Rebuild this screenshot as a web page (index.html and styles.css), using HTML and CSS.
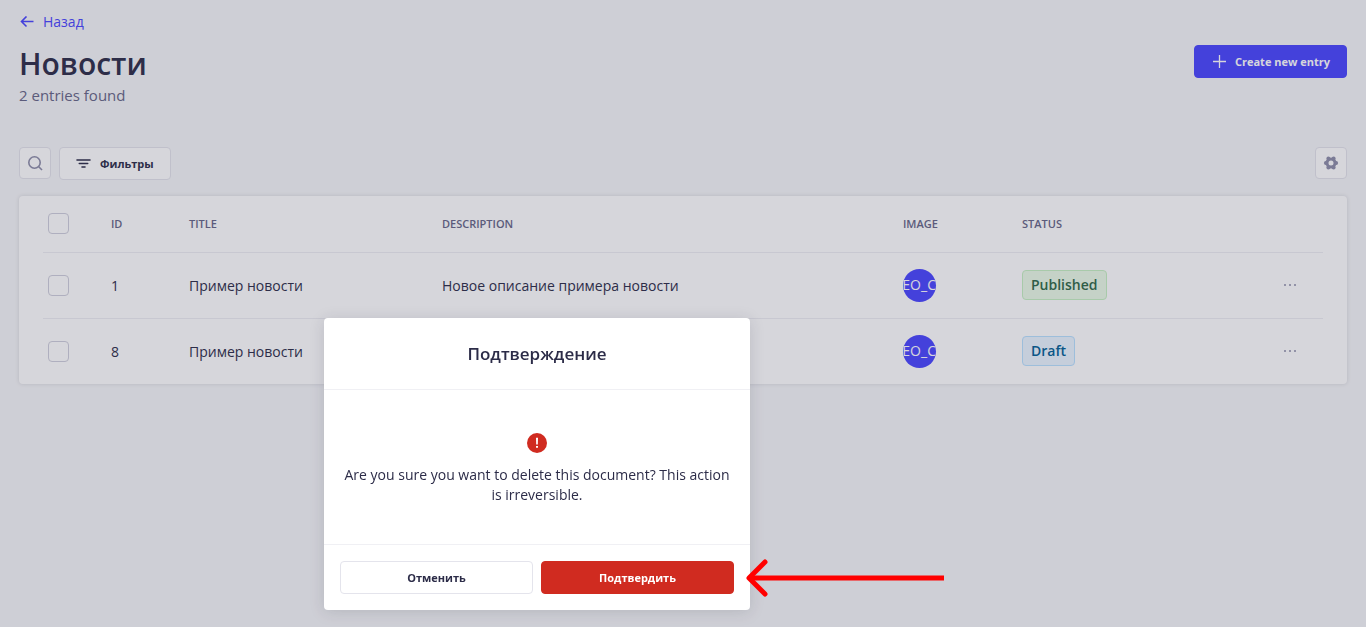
FILE: index.html
```html
<!DOCTYPE html>
<html lang="ru">
<head>
<meta charset="utf-8">
<meta name="viewport" content="width=device-width, initial-scale=1">
<title>Новости</title>
<link rel="stylesheet" href="styles.css">
</head>
<body>
<main class="page">
  <a class="back" href="#">
    <svg width="14" height="12" viewBox="0 0 14 12" fill="none" stroke="currentColor" stroke-width="1.6"><path d="M13.5 5.500H1.500M6.500 .5l-5 5 5 5"/></svg>
    <span>Назад</span>
  </a>
  <header class="header">
    <div>
      <h1 class="title">Новости</h1>
      <p class="subtitle">2 entries found</p>
    </div>
    <button class="btn btn-primary" type="button">
      <svg width="13" height="13" viewBox="0 0 13 13" stroke="currentColor" stroke-width="1.3"><path d="M6.5 0v13M0 6.5h13"/></svg>
      <span>Create new entry</span>
    </button>
  </header>
  <div class="toolbar">
    <button class="icon-btn" type="button" aria-label="Search">
      <svg width="16" height="16" viewBox="0 0 16 16" fill="none" stroke="currentColor" stroke-width="1.6"><circle cx="7.500" cy="7.500" r="5.700"/><path d="M11.500 11.500l3.500 3.500"/></svg>
    </button>
    <button class="btn btn-filter" type="button">
      <svg width="15" height="9" viewBox="0 0 15 9" fill="none" stroke="currentColor" stroke-width="1.6" stroke-linecap="round"><path d="M1 1h13M3.3 4.5h8.4M6 8h3"/></svg>
      <span>Фильтры</span>
    </button>
    <button class="icon-btn settings" type="button" aria-label="Settings">
      <svg width="16" height="16" viewBox="0 0 16 16" fill="currentColor"><circle cx="8" cy="8" r="4" fill="none" stroke="currentColor" stroke-width="3"/><circle cx="2.900" cy="8" r="2"/><circle cx="13.100" cy="8" r="2"/><circle cx="5.400" cy="3.600" r="2"/><circle cx="10.600" cy="3.600" r="2"/><circle cx="5.400" cy="12.400" r="2"/><circle cx="10.600" cy="12.400" r="2"/></svg>
    </button>
  </div>
  <section class="card">
    <table class="table">
      <colgroup><col class="c-check"><col class="c-id"><col class="c-title"><col><col class="c-image"><col class="c-status"><col class="c-more"></colgroup>
      <thead>
        <tr>
          <th><input class="check" type="checkbox" aria-label="Select all"></th>
          <th>ID</th><th>TITLE</th><th>DESCRIPTION</th><th>IMAGE</th><th>STATUS</th><th></th>
        </tr>
      </thead>
      <tbody>
        <tr>
          <td><input class="check" type="checkbox" aria-label="Select entry 1"></td>
          <td class="text">1</td><td class="text">Пример новости</td><td class="text">Новое описание примера новости</td>
          <td><span class="avatar"><span>DEO_CO</span></span></td>
          <td><span class="badge published">Published</span></td>
          <td><button class="more" type="button" aria-label="Actions"><svg width="12" height="2" viewBox="0 0 12 2" fill="currentColor"><circle cx="1" cy="1" r="1"/><circle cx="6" cy="1" r="1"/><circle cx="11" cy="1" r="1"/></svg></button></td>
        </tr>
        <tr>
          <td><input class="check" type="checkbox" aria-label="Select entry 8"></td>
          <td class="text">8</td><td class="text">Пример новости</td><td class="text"></td>
          <td><span class="avatar"><span>DEO_CO</span></span></td>
          <td><span class="badge draft">Draft</span></td>
          <td><button class="more" type="button" aria-label="Actions"><svg width="12" height="2" viewBox="0 0 12 2" fill="currentColor"><circle cx="1" cy="1" r="1"/><circle cx="6" cy="1" r="1"/><circle cx="11" cy="1" r="1"/></svg></button></td>
        </tr>
      </tbody>
    </table>
  </section>
</main>
<div class="overlay">
  <div class="dialog" role="alertdialog" aria-labelledby="dialog-title" aria-describedby="dialog-text">
    <h2 class="dialog-title" id="dialog-title">Подтверждение</h2>
    <div class="dialog-body">
      <svg width="20" height="20" viewBox="0 0 20 20"><circle cx="10" cy="10" r="10" fill="#d02b20"/><path d="M9 4.800h2l-.2 6.700H9.200zM9 13h2v1.800H9z" fill="#fff"/></svg>
      <p class="dialog-text" id="dialog-text">Are you sure you want to delete this document? This action is irreversible.</p>
    </div>
    <div class="dialog-footer">
      <button class="btn btn-cancel" type="button">Отменить</button>
      <button class="btn btn-danger" type="button">Подтвердить</button>
    </div>
    <svg class="pointer" width="198" height="38" viewBox="0 0 198 38" fill="none" stroke="#f00" stroke-width="5"><path d="M198 19H3"/><path d="M19 3L3 19l16 16" stroke-linecap="round" stroke-linejoin="round"/></svg>
  </div>
</div>
</body>
</html>
```

FILE: styles.css
```css
* { box-sizing: border-box; }

body {
  margin: 0;
  min-height: 100vh;
  background: #f6f7f9;
  color: #2c2c48;
  font-family: "Open Sans", "Noto Sans", sans-serif;
  font-size: 14px;
  line-height: 20px;
}

button, input { font: inherit; margin: 0; }
h1, h2, p { margin: 0; }
svg { display: block; flex: none; }

.page { padding: 12px 19px; }

.back {
  display: inline-flex;
  align-items: center;
  gap: 9px;
  padding-left: 1px;
  color: #4945ff;
  text-decoration: none;
}

.header {
  display: flex;
  justify-content: space-between;
  align-items: flex-start;
  padding-top: 12px;
}

.title { font-size: 30px; line-height: 38px; font-weight: 600; }
.subtitle { font-size: 15px; line-height: 24px; color: #666687; }

.btn {
  display: flex;
  align-items: center;
  justify-content: center;
  height: 33px;
  padding: 0 16px;
  border: 1px solid #e4e4ec;
  border-radius: 4px;
  background: #fff;
  color: #2c2c48;
  font-size: 11px;
  font-weight: 700;
}

.btn-primary {
  gap: 9px;
  padding-left: 18px;
  border-color: #4945ff;
  background: #4945ff;
  color: #fff;
}

.toolbar { display: flex; gap: 8px; padding: 40px 0 16px; }

.icon-btn {
  display: flex;
  align-items: center;
  justify-content: center;
  width: 32px;
  height: 32px;
  padding: 0;
  border: 1px solid #e4e4ec;
  border-radius: 4px;
  background: #fff;
  color: #8e8ea9;
}

.settings { margin-left: auto; }
.btn-filter { gap: 9px; }

.card {
  padding: 0 24px;
  border-radius: 4px;
  background: #fff;
  box-shadow: 0 0 4px rgba(33, 33, 52, 0.15);
}

.table { width: 100%; table-layout: fixed; border-collapse: collapse; }
.c-check { width: 63px; }
.c-id { width: 78px; }
.c-title { width: 253px; }
.c-image { width: 119px; }
.c-status { width: 262px; }
.c-more { width: 44px; }

.table th, .table td { padding: 0 5px; text-align: left; vertical-align: middle; }
.table th { height: 56px; color: #666687; font-size: 11px; font-weight: 600; }
.table td { height: 66px; border-top: 1px solid #eeeef3; }
.table .text { padding-top: 2px; }

.check {
  display: block;
  appearance: none;
  width: 21px;
  height: 21px;
  border: 1px solid #cfcfdc;
  border-radius: 4px;
  background: #fff;
}

.avatar {
  display: flex;
  align-items: center;
  justify-content: center;
  width: 33px;
  height: 33px;
  overflow: hidden;
  border-radius: 50%;
  background: #4945ff;
  color: #fff;
}

.badge {
  display: inline-block;
  padding: 4px 8px;
  border: 1px solid;
  border-radius: 4px;
  font-weight: 600;
}

.published { border-color: #c6f0c2; background: #eafbe7; color: #2f6846; }
.draft { border-color: #b8e1ff; background: #eaf5ff; color: #006096; }

.more { display: block; padding: 8px 0; border: 0; background: none; color: #8e8ea9; }

.overlay {
  position: fixed;
  inset: 0;
  padding: 318px 0 0 324px;
  background: rgba(50, 50, 77, 0.2);
}

.dialog {
  position: relative;
  width: 426px;
  border-radius: 4px;
  background: #fff;
  box-shadow: 0 2px 15px rgba(33, 33, 52, 0.15);
}

.dialog-title {
  padding: 24px 24px 23px;
  border-bottom: 1px solid #f0f0f4;
  font-size: 17px;
  line-height: 24px;
  font-weight: 600;
  text-align: center;
}

.dialog-body {
  display: flex;
  flex-direction: column;
  align-items: center;
  gap: 12px;
  padding: 43px 16px 39px;
}

.dialog-text { text-align: center; }

.dialog-footer {
  display: grid;
  grid-template-columns: 1fr 1fr;
  gap: 8px;
  padding: 16px;
  border-top: 1px solid #f0f0f4;
}

.btn-danger { border-color: #d02b20; background: #d02b20; color: #fff; }

.pointer { position: absolute; left: 422px; bottom: 13px; }
```
